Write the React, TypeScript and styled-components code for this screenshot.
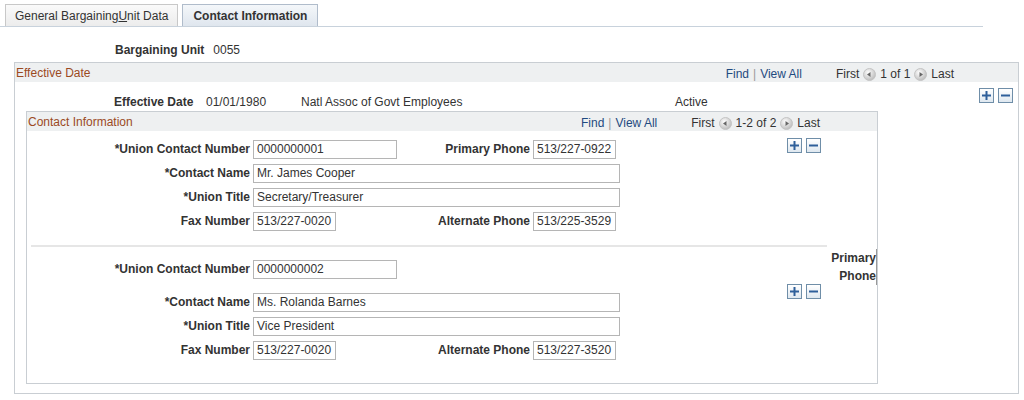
import React from "react"
import styled, { createGlobalStyle } from "styled-components"

const Global = createGlobalStyle`
  body { margin: 0; background: #fff; font-family: "Liberation Sans", Arial, sans-serif; font-size: 12px; color: #333; }
`

const Page = styled.div`
  width: 1024px;
  height: 400px;
  position: relative;
`

const TabBar = styled.div`
  display: flex;
  gap: 4px;
  padding: 4px 0 0 5px;
  width: 978px;
  border-bottom: 1px solid #c8d2dc;
  height: 22px;
`

const Tab = styled.div<{ $active?: boolean }>`
  height: 21px;
  padding: 0 ${(p) => (p.$active ? "10px" : "9px")};
  display: flex;
  align-items: center;
  border: 1px solid ${(p) => (p.$active ? "#b0bccb" : "#c8c8c8")};
  border-bottom: none;
  background: ${(p) => (p.$active ? "linear-gradient(#f4f7fa, #dfe6ee)" : "linear-gradient(#fafafa, #ececec)")};
  font-weight: ${(p) => (p.$active ? "bold" : "normal")};
  color: #333;
  font-size: 12px;
`

const UnitRow = styled.div`
  display: flex;
  gap: 9px;
  margin: 16px 0 0 115px;
  height: 15px;
  b { font-weight: bold; }
`

const Box = styled.div<{ $w: number; $h: number }>`
  width: ${(p) => p.$w}px;
  height: ${(p) => p.$h}px;
  border: 1px solid #c9ced3;
  box-sizing: border-box;
`

const Outer = styled(Box)`
  margin: 4px 0 0 14px;
`

const Header = styled.div`
  height: 19px;
  background: #eef0f1;
  display: flex;
  align-items: center;
  padding-left: 1px;
`

const Title = styled.span`
  color: #9b4a1f;
  font-size: 12px;
  flex: 1;
`

const Nav = styled.div`
  display: flex;
  align-items: center;
  gap: 4px;
  color: #333;
  margin-right: ${(p: { $mr: number }) => p.$mr}px;
  padding-top: 3px;
`

const Link = styled.span`
  color: #1f4a80;
`

const Circle = ({ dir }: { dir: "l" | "r" }) => (
  <svg width="13" height="13" viewBox="0 0 13 13">
    <defs>
      <radialGradient id={"g" + dir} cx="0.4" cy="0.35" r="0.7">
        <stop offset="0" stopColor="#ffffff" />
        <stop offset="1" stopColor="#b8b8b8" />
      </radialGradient>
    </defs>
    <circle cx="6.5" cy="6.5" r="6" fill={`url(#g${dir})`} stroke="#c4c4c4" />
    {dir === "l" ? <path d="M4 6.5 L7.5 4 L7.5 9 Z" fill="#666" /> : <path d="M9 6.5 L5.5 4 L5.5 9 Z" fill="#666" />}
  </svg>
)

const NavBlock = ({ count, mr }: { count: string; mr: number }) => (
  <Nav $mr={mr}>
    <Link>Find</Link> <span style={{ color: "#999" }}>|</span> <Link>View All</Link>
    <span style={{ width: 26 }} />
    First <Circle dir="l" /> {count} <Circle dir="r" /> Last
  </Nav>
)

const BtnGroup = styled.div`
  display: flex;
  gap: 4px;
`

const SqBtn = styled.div`
  width: 15px;
  height: 15px;
  box-sizing: border-box;
  border: 1px solid #6f8ea8;
  background: linear-gradient(#ffffff, #dfe8f0);
  display: flex;
  align-items: center;
  justify-content: center;
`

const PlusMinus = () => (
  <BtnGroup>
    <SqBtn>
      <svg width="9" height="9" viewBox="0 0 9 9"><path d="M0 4.5H9M4.5 0V9" stroke="#2e5f9a" strokeWidth="2" /></svg>
    </SqBtn>
    <SqBtn>
      <svg width="9" height="9" viewBox="0 0 9 9"><path d="M0 4.5H9" stroke="#2e5f9a" strokeWidth="2" /></svg>
    </SqBtn>
  </BtnGroup>
)

const EffRow = styled.div`
  display: flex;
  align-items: flex-start;
  height: 29px;
`

const EffText = styled.div`
  display: flex;
  margin-top: 13px;
  height: 15px;
`

const Inner = styled(Box)`
  margin-left: 11px;
`

const Record = styled.div<{ $h: number }>`
  display: flex;
  height: ${(p) => p.$h}px;
  position: relative;
`

const Fields = styled.div`
  display: flex;
  flex-direction: column;
  width: 760px;
`

const Row = styled.div<{ $mt?: number }>`
  display: flex;
  align-items: center;
  height: 24px;
  margin-top: ${(p) => p.$mt ?? 0}px;
`

const Label = styled.label<{ $w: number }>`
  width: ${(p) => p.$w}px;
  text-align: right;
  font-weight: bold;
  margin-right: 3px;
  color: #333;
`

const Input = styled.div<{ $w: number }>`
  width: ${(p) => p.$w}px;
  height: 19px;
  box-sizing: border-box;
  border: 1px solid #b5b5b5;
  padding: 0 3px;
  display: flex;
  align-items: center;
  color: #333;
`

const Divider = styled.div`
  height: 2px;
  background: #e6e6e6;
  margin: 0 50px 0 4px;
`

const SideLabel = styled.div`
  font-weight: bold;
  text-align: right;
  line-height: 18px;
  width: 46px;
  margin-left: auto;
  border-right: 1px solid #999;
  height: 36px;
`

type F = { label: string; value: string; w: number }

const Line = ({ a, b, mt }: { a: F; b?: F; mt?: number }) => (
  <Row $mt={mt}>
    <Label $w={223}>{a.label}</Label>
    <Input $w={a.w}>{a.value}</Input>
    {b && (
      <>
        <Label $w={534 - 254 - a.w - 3}>{b.label}</Label>
        <Input $w={b.w}>{b.value}</Input>
      </>
    )}
  </Row>
)

export default function App() {
  return (
    <Page>
      <Global />
      <TabBar>
        <Tab>General Bargaining <u>U</u>nit Data</Tab>
        <Tab $active>Contact Information</Tab>
      </TabBar>
      <UnitRow>
        <b>Bargaining Unit</b>
        <span>0055</span>
      </UnitRow>
      <Outer $w={1005} $h={332}>
        <Header>
          <Title>Effective Date</Title>
          <NavBlock count="1 of 1" mr={64} />
        </Header>
        <EffRow>
          <EffText>
            <b style={{ marginLeft: 99, width: 92 }}>Effective Date</b>
            <span style={{ marginLeft: 0, width: 95 }}>01/01/1980</span>
            <span style={{ width: 374 }}>Natl Assoc of Govt Employees</span>
            <span>Active</span>
          </EffText>
          <div style={{ marginLeft: "auto", marginRight: 5, marginTop: 6 }}>
            <PlusMinus />
          </div>
        </EffRow>
        <Inner $w={852} $h={273}>
          <Header>
            <Title>Contact Information</Title>
            <NavBlock count="1-2 of 2" mr={57} />
          </Header>
          <Record $h={114}>
            <Fields style={{ paddingTop: 6 }}>
              <Line a={{ label: "*Union Contact Number", value: "0000000001", w: 144 }} b={{ label: "Primary Phone", value: "513/227-0922", w: 83 }} />
              <Line a={{ label: "*Contact Name", value: "Mr. James Cooper", w: 367 }} />
              <Line a={{ label: "*Union Title", value: "Secretary/Treasurer", w: 367 }} />
              <Line a={{ label: "Fax Number", value: "513/227-0020", w: 83 }} b={{ label: "Alternate Phone", value: "513/225-3529", w: 83 }} />
            </Fields>
            <div style={{ marginTop: 7 }}>
              <PlusMinus />
            </div>
          </Record>
          <Divider />
          <Record $h={136}>
            <Fields style={{ paddingTop: 10 }}>
              <Line a={{ label: "*Union Contact Number", value: "0000000002", w: 144 }} />
              <Line mt={9} a={{ label: "*Contact Name", value: "Ms. Rolanda Barnes", w: 367 }} />
              <Line a={{ label: "*Union Title", value: "Vice President", w: 367 }} />
              <Line a={{ label: "Fax Number", value: "513/227-0020", w: 83 }} b={{ label: "Alternate Phone", value: "513/227-3520", w: 83 }} />
            </Fields>
            <div style={{ marginTop: 37 }}>
              <PlusMinus />
            </div>
            <SideLabel style={{ marginTop: 2 }}>Primary Phone</SideLabel>
          </Record>
        </Inner>
      </Outer>
    </Page>
  )
}
